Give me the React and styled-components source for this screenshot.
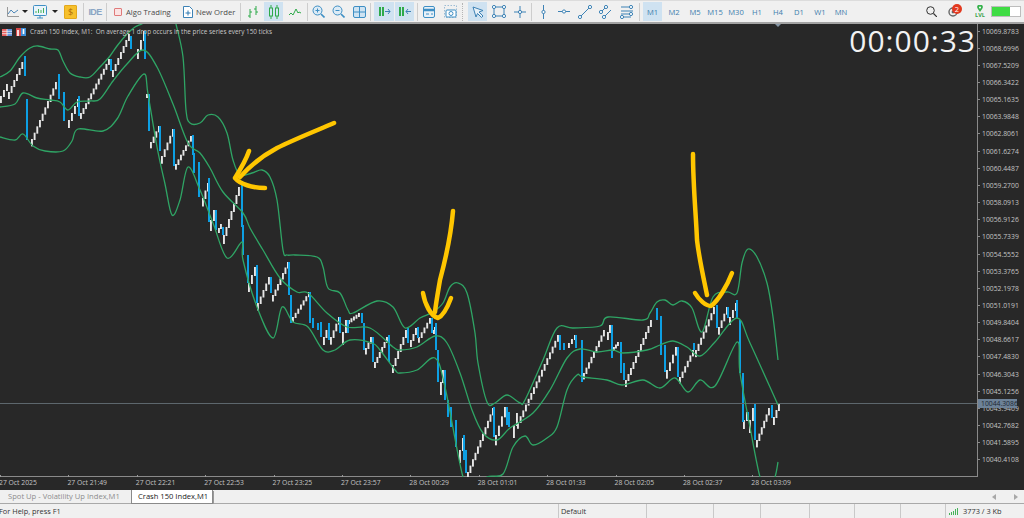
import React from "react";
import styled, { createGlobalStyle } from "styled-components";

const upperBand = [
  [0, 77], [10, 71], [20, 57], [30, 48], [38, 46], [50, 49], [58, 50], [63, 61], [70, 73], [80, 77], [90, 77],
  [100, 67], [110, 56], [117, 46], [127, 34], [135, 27], [145, 22], [160, 8], [172, 8], [176, 24], [183, 57], [186, 110],
  [190, 123], [200, 123], [208, 115], [218, 117], [227, 133], [233, 160], [240, 175], [252, 173], [262, 170], [270, 177],
  [277, 200], [283, 250], [287, 255], [295, 255], [317, 257], [323, 267], [328, 288], [340, 293], [348, 310], [353, 313],
  [377, 301], [393, 307], [405, 328], [420, 318], [433, 312], [443, 303], [450, 287], [458, 283], [467, 293], [475, 333],
  [478, 363], [487, 402], [495, 403], [507, 395], [520, 403], [525, 400], [543, 360], [557, 328], [573, 328], [600, 326],
  [608, 317], [643, 320], [650, 313], [657, 302], [665, 300], [673, 305], [682, 301], [692, 308], [702, 332], [713, 297],
  [727, 292], [737, 293], [742, 263], [748, 249], [757, 257], [767, 283], [773, 317], [778, 360],
];
const middleBand = [
  [0, 107], [15, 104], [23, 93], [37, 98], [50, 100], [60, 102], [68, 110], [77, 102], [90, 101], [100, 99], [113, 81],
  [127, 64], [143, 50], [157, 67], [173, 104], [188, 143], [200, 153], [210, 168], [223, 192], [243, 213], [250, 228],
  [263, 250], [280, 278], [297, 292], [308, 293], [327, 313], [347, 327], [370, 328], [393, 347], [400, 350], [417, 347],
  [435, 336], [447, 343], [460, 373], [472, 410], [483, 433], [497, 440], [510, 428], [533, 413], [550, 390], [567, 358],
  [580, 349], [597, 352], [613, 350], [623, 353], [647, 350], [660, 345], [673, 341], [687, 347], [700, 356], [715, 342],
  [737, 318], [750, 343], [778, 405],
];
const lowerBand = [
  [0, 137], [15, 140], [23, 134], [33, 146], [45, 151], [63, 151], [72, 141], [78, 129], [103, 131], [117, 119], [128, 96],
  [144, 74], [148, 94], [157, 147], [165, 184], [172, 215], [180, 200], [188, 167], [200, 190], [213, 223], [227, 258],
  [242, 242], [243, 260], [257, 307], [273, 338], [282, 307], [293, 322], [308, 327], [323, 350], [335, 350], [350, 340],
  [372, 343], [380, 350], [395, 370], [400, 373], [417, 370], [435, 358], [445, 387], [463, 477], [475, 492], [487, 477],
  [503, 474], [513, 447], [525, 436], [533, 445], [547, 438], [557, 427], [567, 390], [577, 375], [583, 377], [607, 380],
  [622, 385], [643, 380], [660, 388], [675, 378], [688, 392], [700, 380], [715, 386], [737, 342], [740, 373], [750, 427],
  [760, 477], [768, 492], [775, 477], [778, 462],
];

const whiteRuns = [
  [0, 96, 6, 84], [8, 92, 24, 56], [31, 139, 55, 82], [68, 120, 77, 99], [80, 113, 108, 59], [112, 70, 128, 34], [137, 49, 143, 31],
  [146, 94, 147, 94], [150, 142, 158, 126], [161, 156, 172, 129], [175, 164, 190, 136], [202, 198, 207, 183], [210, 220, 213, 210],
  [218, 228, 220, 224], [223, 235, 238, 187], [248, 283, 254, 267], [257, 303, 268, 277], [272, 295, 287, 262], [292, 317, 308, 292],
  [323, 337, 328, 323], [330, 337, 338, 317], [342, 332, 345, 320], [348, 320, 358, 313], [365, 348, 370, 337], [374, 362, 386, 337],
  [392, 365, 405, 330], [410, 340, 415, 328], [418, 337, 429, 318], [433, 330, 434, 327], [440, 382, 442, 370], [459, 450, 462, 438],
  [467, 472, 492, 408], [495, 435, 504, 407], [513, 425, 516, 413], [517, 422, 557, 335], [568, 343, 574, 335], [583, 373, 603, 330],
  [607, 332, 609, 325], [613, 347, 617, 342], [625, 380, 650, 320], [666, 370, 675, 347], [679, 377, 692, 350], [695, 350, 713, 307],
  [718, 327, 726, 307], [729, 317, 735, 303], [743, 420, 746, 412], [749, 420, 752, 408], [756, 440, 768, 408], [773, 417, 778, 403],
];
const blueBars = [
  [24, 56, 76], [26, 99, 140], [58, 74, 99], [63, 92, 121], [78, 96, 116], [110, 59, 71], [130, 36, 49], [144, 31, 59], [148, 94, 131],
  [159, 126, 151], [173, 129, 166], [192, 135, 155], [193, 153, 173], [198, 162, 197], [208, 178, 222], [215, 210, 230], [222, 227, 235],
  [241, 183, 227], [242, 225, 255], [247, 255, 283], [256, 265, 303], [270, 277, 293], [288, 262, 295], [290, 295, 323], [309, 292, 323],
  [312, 318, 328], [317, 323, 330], [320, 322, 337], [328, 323, 340], [339, 317, 333], [347, 320, 333], [361, 313, 323], [363, 323, 350],
  [372, 337, 362], [388, 335, 362], [407, 328, 343], [417, 327, 338], [431, 318, 333], [435, 323, 350], [437, 350, 382], [444, 370, 400],
  [447, 400, 417], [450, 407, 427], [455, 420, 447], [463, 435, 460], [465, 450, 473], [493, 407, 437], [506, 407, 425], [508, 412, 427],
  [559, 335, 350], [563, 343, 350], [575, 335, 348], [581, 340, 382], [611, 325, 358], [620, 342, 373], [623, 363, 380], [656, 308, 320],
  [660, 316, 355], [664, 345, 372], [677, 347, 377], [693, 343, 350], [716, 305, 328], [727, 307, 318], [736, 300, 318], [739, 320, 373],
  [742, 373, 422], [747, 412, 420], [754, 403, 440], [771, 405, 418],
];
const arrows = [
  "M334 123 C318 130 295 139 277 148 C262 156 250 166 240 177",
  "M249 151 C246 160 240 170 235 178 C240 184 252 188 265 188",
  "M453 211 C451 235 444 265 440 280 C438 292 436 303 435 312",
  "M423 293 C425 305 431 316 438 318 C443 316 448 306 451 298",
  "M693 154 C693 185 696 215 697 240 C699 258 704 280 707 295",
  "M695 293 C699 300 706 306 711 306 C718 301 727 286 732 273",
];

const prices = [
  "10069.8783", "10068.6996", "10067.5209", "10066.3422", "10065.1635", "10063.9848", "10062.8061", "10061.6274", "10060.4487",
  "10059.2700", "10058.0913", "10056.9126", "10055.7339", "10054.5552", "10053.3765", "10052.1978", "10051.0191", "10049.8404",
  "10048.6617", "10047.4830", "10046.3043", "10045.1256", "10043.9469", "10042.7682", "10041.5895", "10040.4108",
];
const times = [
  "27 Oct 2025", "27 Oct 21:49", "27 Oct 22:21", "27 Oct 22:53", "27 Oct 23:25", "27 Oct 23:57",
  "28 Oct 00:29", "28 Oct 01:01", "28 Oct 01:33", "28 Oct 02:05", "28 Oct 02:37", "28 Oct 03:09",
];
const frames = [["M2", 24], ["M5", 18], ["M15", 22], ["M30", 20], ["H1", 22], ["H4", 20], ["D1", 22], ["W1", 20], ["MN", 22]];

// catmull-rom so the bands look like a moving average and not a zigzag
function smooth(pts) {
  let d = `M${pts[0][0]} ${pts[0][1]}`;
  for (let i = 0; i < pts.length - 1; i++) {
    const p0 = pts[i - 1] || pts[i];
    const p1 = pts[i];
    const p2 = pts[i + 1];
    const p3 = pts[i + 2] || p2;
    const c1x = p1[0] + (p2[0] - p0[0]) / 6;
    const c1y = p1[1] + (p2[1] - p0[1]) / 6;
    const c2x = p2[0] - (p3[0] - p1[0]) / 6;
    const c2y = p2[1] - (p3[1] - p1[1]) / 6;
    d += ` C${c1x.toFixed(1)} ${c1y.toFixed(1)} ${c2x.toFixed(1)} ${c2y.toFixed(1)} ${p2[0]} ${p2[1]}`;
  }
  return d;
}

function bricks([x0, y0, x1, y1]) {
  const n = Math.max(1, Math.round((x1 - x0) / 2.6));
  const out = [];
  for (let i = 0; i <= n; i++) {
    const x = x0 + ((x1 - x0) * i) / n;
    const y = y0 + ((y1 - y0) * i) / n;
    out.push({ x, y, h: Math.max(4, Math.abs(y1 - y0) / n + 1) });
  }
  return out;
}

function CandleChart() {
  return (
    <ChartSvg viewBox="0 24 977 453" width="977" height="453">
      {whiteRuns.flatMap(bricks).map((b, i) => (
        <rect key={i} x={b.x} y={b.y} width="1.9" height={b.h} fill="#e6e6e6" />
      ))}
      {blueBars.map(([x, a, b], i) => (
        <rect key={i} x={x} y={a} width="2" height={b - a} fill="#0d9fe3" />
      ))}
      <rect x="0" y="403" width="977" height="1" fill="#5d676d" />
      {[upperBand, middleBand, lowerBand].map((b, i) => (
        <path key={i} d={smooth(b)} fill="none" stroke="#2fa565" strokeWidth="1.3" />
      ))}
      {arrows.map((d, i) => (
        <path key={i} d={d} fill="none" stroke="#ffc600" strokeWidth="4.5" strokeLinecap="round" strokeLinejoin="round" />
      ))}
    </ChartSvg>
  );
}

const Ico = ({ w = 14, h = 14, children }) => (
  <svg width={w} height={h} viewBox={`0 0 ${w} ${h}`} fill="none" strokeWidth="1">
    {children}
  </svg>
);

function Caret() {
  return (
    <CaretBox>
      <svg width="6" height="3" viewBox="0 0 6 3"><path d="M0 0h6L3 3z" fill="#222" /></svg>
    </CaretBox>
  );
}

const handle = (x, y) => <circle cx={x} cy={y} r="1.6" fill="#fff" stroke="#3d82b5" />;

export default function App() {
  return (
    <>
      <GlobalStyle />
      <Window>
        <Toolbar>
          <Tool $w={18}>
            <Ico w={12} h={10}>
              <path d="M.5 0v9.5H12" stroke="#9a9a9a" />
              <path d="M1 7l3-4 3 3 4-3" stroke="#4c86b8" />
            </Ico>
          </Tool>
          <Caret />
          <Tool $w={24}>
            <Ico w={14} h={14}>
              <rect x=".5" y=".5" width="13" height="10" rx="1" fill="#eaf4fb" stroke="#3f8fc4" />
              <path d="M3 8V6M5.5 8V4M8 8V5M10.5 8V3" stroke="#45b25a" />
              <path d="M4 13h6M7 11v2" stroke="#3f8fc4" />
            </Ico>
          </Tool>
          <Caret />
          <Tool $w={25}>
            <CoinIcon>$</CoinIcon>
          </Tool>
          <Sep />
          <Tool $w={22}>
            <IdeLabel>IDE</IdeLabel>
          </Tool>
          <Sep />
          <TextTool $w={71} $pl={7} $gap={5}>
            <AlgoMark />
            Algo Trading
          </TextTool>
          <TextTool $w={62} $pl={5} $gap={3}>
            <Ico w={10} h={12}>
              <path d="M.5.5h6l3 3v8h-9z" fill="#fff" stroke="#3d82b5" />
              <path d="M5 4.5v5M2.5 7h5" stroke="#2f78b0" />
            </Ico>
            New Order
          </TextTool>
          <Sep />
          <Tool $w={23}>
            <Ico w={12} h={12}>
              <path d="M3 3v9M1 10h2M3 6h2M9 0v9M7 3h2M9 6h2" stroke="#2eaa4a" />
            </Ico>
          </Tool>
          <Tool $w={19} $active>
            <Ico w={12} h={14}>
              <rect x="1.5" y="3" width="3" height="8" stroke="#2eaa4a" />
              <rect x="7.5" y="3" width="3" height="8" stroke="#2eaa4a" />
              <path d="M3 0v3M3 11v3M9 0v3M9 11v3" stroke="#2eaa4a" />
            </Ico>
          </Tool>
          <Tool $w={24}>
            <Ico w={12} h={8}>
              <path d="M0 7l2-2 2 2 3-6 2 4 1-1 2 1" stroke="#2eaa4a" />
            </Ico>
          </Tool>
          <Sep />
          <Tool $w={21}>
            <Ico w={13} h={13}>
              <circle cx="5.5" cy="5.5" r="4.5" fill="#dcebf6" stroke="#3f8fc4" />
              <path d="M3.5 5.5h4M5.5 3.5v4" stroke="#3f8fc4" />
              <path d="M9 9l3.5 3.5" stroke="#3f8fc4" strokeWidth="1.6" />
            </Ico>
          </Tool>
          <Tool $w={18}>
            <Ico w={13} h={13}>
              <circle cx="5.5" cy="5.5" r="4.5" fill="#dcebf6" stroke="#3f8fc4" />
              <path d="M3.5 5.5h4" stroke="#3f8fc4" />
              <path d="M9 9l3.5 3.5" stroke="#3f8fc4" strokeWidth="1.6" />
            </Ico>
          </Tool>
          <Tool $w={21} $ml={2}>
            <Ico w={13} h={12}>
              <rect x=".5" y=".5" width="12" height="11" rx="1.5" fill="#cfe3f2" stroke="#3f8fc4" />
              <path d="M6.5 0v12M0 6h13" stroke="#3f8fc4" />
            </Ico>
          </Tool>
          <Sep />
          <Tool $w={20} $ml={3} $active>
            <Ico w={13} h={12}>
              <path d="M2 1v9M5 1v9" stroke="#2eaa4a" strokeWidth="2" />
              <path d="M7 5.5h5M10 3l2 2.5L10 8" stroke="#3d82b5" />
            </Ico>
          </Tool>
          <Tool $w={19} $ml={1} $active>
            <Ico w={13} h={12}>
              <path d="M2 1v9M5 1v9" stroke="#2eaa4a" strokeWidth="2" />
              <path d="M8 5.5h5M10 3L8 5.5 10 8" stroke="#3d82b5" />
            </Ico>
          </Tool>
          <Sep $ml={3} />
          <Tool $w={22}>
            <Ico w={12} h={12}>
              <rect x=".5" y=".5" width="11" height="11" rx="1.5" fill="#e8f1f8" stroke="#3f8fc4" />
              <path d="M0 4h12" stroke="#3f8fc4" strokeWidth="2.5" />
              <path d="M3 8h3M8 8h2" stroke="#3f8fc4" />
            </Ico>
          </Tool>
          <Tool $w={21}>
            <Ico w={13} h={13}>
              <rect x=".5" y=".5" width="12" height="12" stroke="#9dbcd4" strokeDasharray="1.5 1.5" />
              <rect x="2" y="5" width="10" height="7" rx="1" fill="#fff" stroke="#3f8fc4" />
              <circle cx="7" cy="8.5" r="2" stroke="#3f8fc4" />
            </Ico>
          </Tool>
          <DotSep />
          <Tool $w={19} $ml={4} $active>
            <Ico w={12} h={12}>
              <path d="M1 1l10 3.5-4 1.5 4 4-1.5 1.5-4-4L4 11z" fill="#e8f1f8" stroke="#3d82b5" />
            </Ico>
          </Tool>
          <Tool $w={23}>
            <Ico w={14} h={13}>
              <rect x="2" y="2" width="10" height="9" stroke="#3d82b5" />
              {handle(2, 2)}{handle(12, 2)}{handle(2, 11)}{handle(12, 11)}
            </Ico>
          </Tool>
          <Tool $w={19}>
            <Ico w={12} h={12}>
              <path d="M6 0v12M0 6h12" stroke="#3d82b5" />
              {handle(6, 6)}
            </Ico>
          </Tool>
          <Sep $ml={2} />
          <Tool $w={22}>
            <Ico w={5} h={14}>
              <path d="M2.5 0v14" stroke="#3d82b5" />
              {handle(2.5, 7)}
            </Ico>
          </Tool>
          <Tool $w={20}>
            <Ico w={12} h={5}>
              <path d="M0 2.5h12" stroke="#3d82b5" />
              {handle(6, 2.5)}
            </Ico>
          </Tool>
          <Tool $w={22}>
            <Ico w={14} h={14}>
              <path d="M2 12L12 2" stroke="#3d82b5" />
              {handle(2, 12)}{handle(12, 2)}
            </Ico>
          </Tool>
          <Tool $w={20}>
            <Ico w={14} h={14}>
              <path d="M1 8l6-6M5 12l7-7" stroke="#3d82b5" />
              {handle(2, 7)}{handle(7, 2)}{handle(5, 12)}
            </Ico>
          </Tool>
          <Tool $w={21}>
            <Ico w={13} h={14}>
              <path d="M1 2h12M1 6h12M1 9h12M1 12h10" stroke="#3d82b5" />
              {handle(11, 2)}{handle(11, 9)}{handle(2, 12)}
            </Ico>
          </Tool>
          <Sep $ml={2} />
          <FrameTool $w={19} $ml={3} $active>M1</FrameTool>
          {frames.map(([name, w]) => (
            <FrameTool key={name} $w={w}>{name}</FrameTool>
          ))}
          <RightGroup>
            <Tool $w={12}>
              <Ico w={11} h={11}>
                <circle cx="4.5" cy="4.5" r="3.8" stroke="#333" />
                <path d="M7.5 7.5L11 11" stroke="#333" strokeWidth="1.2" />
              </Ico>
            </Tool>
            <BellBox>
              <Ico w={10} h={10}>
                <circle cx="5" cy="5" r="4" stroke="#666" strokeWidth="1.4" />
                <circle cx="5" cy="5" r="1.4" fill="#666" />
              </Ico>
              <RedBadge>2</RedBadge>
            </BellBox>
            <LevelBox>
              <Ico w={6} h={7}>
                <path d="M3 7L.6 3.4a2.8 2.8 0 1 1 4.8 0z" fill="#37b24d" />
                <circle cx="3" cy="2.6" r="1" fill="#fff" />
              </Ico>
              <LevelText>LVL</LevelText>
            </LevelBox>
            <Meter>
              <MeterFill style={{ width: "66%" }} />
            </Meter>
          </RightGroup>
        </Toolbar>

        <ChartRow>
          <Plot>
            <CandleChart />
            <Legend>
              <Ico w={10} h={7}>
                <rect width="10" height="7" fill="#e85e5e" />
                <path d="M5 0h5v7H5z" fill="#5b8fd8" />
                <path d="M0 2.3h10M0 4.7h10M5 0v7" stroke="#f4f4f4" strokeWidth=".8" />
              </Ico>
              <Ico w={10} h={8}>
                <rect width="5" height="8" fill="#d94a4a" />
                <rect x="5" width="5" height="8" fill="#3e8fd8" />
                <path d="M2 2v6M7.5 1v5" stroke="#fff" strokeWidth="1.6" />
              </Ico>
              <LegendText>Crash 150 Index, M1:&nbsp; On average 1 drop occurs in the price series every 150 ticks</LegendText>
            </Legend>
            <ShiftMark />
          </Plot>
          <PriceAxis>
            {prices.map((p) => (
              <PriceLabel key={p}>{p}</PriceLabel>
            ))}
          </PriceAxis>
          <Timer>00:00:33</Timer>
          <PriceTag>10044.3086</PriceTag>
        </ChartRow>

        <TimeAxis>
          {times.map((t) => (
            <TimeLabel key={t}>{t}</TimeLabel>
          ))}
        </TimeAxis>

        <TabBar>
          <Tab>Spot Up - Volatility Up Index,M1</Tab>
          <Tab $active>Crash 150 Index,M1</Tab>
          <TabArrows>
            <svg width="4" height="6" viewBox="0 0 4 6"><path d="M4 0v6L0 3z" fill="#a8a8a8" /></svg>
            <svg width="4" height="6" viewBox="0 0 4 6"><path d="M0 0v6l4-3z" fill="#a8a8a8" /></svg>
          </TabArrows>
        </TabBar>

        <StatusBar>
          <StatusCell $w={559}>For Help, press F1</StatusCell>
          <StatusCell $w={88} $pl={2} $line>Default</StatusCell>
          <StatusCell $w={67} $line />
          <StatusCell $w={47} $line />
          <StatusCell $w={49} $line />
          <StatusCell $w={45} $line />
          <StatusCell $w={46} $line />
          <StatusCell $w={45} $line />
          <StatusCell $w={78} $pl={3} $gap={5} $line>
            <svg width="9" height="7" viewBox="0 0 9 7">
              <path d="M0 5h1v2H0zM2 4h1v3H2zM4 3h1v4H4zM6 1h1v6H6zM8 0h1v7H8z" fill="#45b35a" />
            </svg>
            3773 / 3 Kb
          </StatusCell>
        </StatusBar>
      </Window>
    </>
  );
}

const GlobalStyle = createGlobalStyle`
  html, body {
    margin: 0;
    padding: 0;
    background: #f0f0f0;
  }
`;

const Window = styled.div`
  width: 1024px;
  height: 518px;
  overflow: hidden;
  display: flex;
  flex-direction: column;
  font-family: "Open Sans", "Liberation Sans", sans-serif;
`;

const Toolbar = styled.div`
  height: 24px;
  flex: none;
  box-sizing: border-box;
  display: flex;
  align-items: center;
  padding-left: 4px;
  background: #f0f0f0;
  border-top: 1px solid #dcdcdc;
  border-bottom: 2px solid #a3a3a3;
`;

const Tool = styled.div`
  width: ${(p) => p.$w}px;
  height: 19px;
  margin-left: ${(p) => p.$ml || 0}px;
  flex: none;
  display: flex;
  align-items: center;
  justify-content: center;
  background: ${(p) => (p.$active ? "#cfe2f1" : "transparent")};
`;

const TextTool = styled(Tool)`
  justify-content: flex-start;
  padding-left: ${(p) => p.$pl}px;
  gap: ${(p) => p.$gap}px;
  box-sizing: border-box;
  font-size: 7.7px;
  color: #4a4a4a;
  white-space: nowrap;
`;

const FrameTool = styled(Tool)`
  font-size: 7.6px;
  color: #3f7eae;
`;

const CaretBox = styled.div`
  width: 6px;
  flex: none;
  display: flex;
  justify-content: center;
`;

const CoinIcon = styled.div`
  width: 11px;
  height: 12px;
  border-radius: 1px;
  background: #f6c02c;
  border: 1px solid #e3a81c;
  display: flex;
  align-items: center;
  justify-content: center;
  font-size: 9px;
  color: #b06f0a;
`;

const IdeLabel = styled.span`
  font-family: "Liberation Sans", sans-serif;
  font-size: 9px;
  font-weight: 700;
  letter-spacing: -0.6px;
  color: #8aa5c4;
`;

const AlgoMark = styled.span`
  width: 6px;
  height: 6px;
  flex: none;
  margin-right: -1px;
  background: #fbe3e3;
  border: 1px solid #e07a7a;
  border-radius: 1px;
`;

const Sep = styled.div`
  width: 1px;
  height: 18px;
  flex: none;
  margin-left: ${(p) => p.$ml || 0}px;
  background: #cdcdcd;
`;

const DotSep = styled.div`
  width: 1px;
  height: 18px;
  flex: none;
  margin-left: 1px;
  border-left: 1px dotted #b5b5b5;
`;

const RightGroup = styled.div`
  margin-left: auto;
  display: flex;
  align-items: center;
  padding-right: 3px;
`;

const BellBox = styled.div`
  position: relative;
  width: 10px;
  margin-left: 11px;
  display: flex;
`;

const RedBadge = styled.span`
  position: absolute;
  left: 4px;
  top: -3px;
  width: 10px;
  height: 10px;
  border-radius: 50%;
  background: #e2391f;
  color: #fff;
  font-size: 7.5px;
  line-height: 10px;
  text-align: center;
`;

const LevelBox = styled.div`
  width: 10px;
  margin-left: 17px;
  display: flex;
  flex-direction: column;
  align-items: center;
`;

const LevelText = styled.span`
  font-size: 5.5px;
  line-height: 6px;
  font-weight: 700;
  color: #37a34a;
`;

const Meter = styled.div`
  width: 28px;
  height: 9px;
  margin-left: 6px;
  background: #fff;
  border: 1px solid #bdbdbd;
  display: flex;
`;

const MeterFill = styled.div`
  background: #3fdc44;
`;

const ChartRow = styled.div`
  position: relative;
  height: 453px;
  flex: none;
  display: flex;
  background: #282828;
`;

const Plot = styled.div`
  position: relative;
  width: 978px;
  flex: none;
  overflow: hidden;
  box-shadow: inset -1px 0 0 #8a8a8a, inset 0 -1px 0 #8a8a8a;
`;

const ChartSvg = styled.svg`
  display: block;
`;

const Legend = styled.div`
  position: absolute;
  left: 2px;
  top: 3px;
  display: flex;
  align-items: center;
  gap: 4px;
`;

const LegendText = styled.span`
  font-size: 6.4px;
  line-height: 10px;
  color: #c8c8c8;
  white-space: nowrap;
`;

const ShiftMark = styled.div`
  position: absolute;
  left: 775px;
  top: 0;
  width: 0;
  height: 0;
  border-left: 3px solid transparent;
  border-right: 3px solid transparent;
  border-top: 3px solid #8596a6;
`;

const Timer = styled.div`
  position: absolute;
  right: 48px;
  top: 0;
  font-size: 30px;
  line-height: 34px;
  letter-spacing: 1px;
  color: #f2f2f2;
  white-space: nowrap;
`;

const PriceAxis = styled.div`
  flex: 1;
  display: flex;
  flex-direction: column;
  gap: 5.16px;
  padding-top: 1px;
  overflow: hidden;
`;

const PriceLabel = styled.div`
  height: 12px;
  display: flex;
  align-items: center;
  gap: 2px;
  font-size: 6.8px;
  color: #c4c4c4;
  white-space: nowrap;

  &::before {
    content: "";
    width: 2px;
    height: 1px;
    flex: none;
    background: #8a8a8a;
  }
`;

const PriceTag = styled.div`
  position: absolute;
  left: 978px;
  top: 375px;
  width: 39px;
  height: 9px;
  background: #6d8298;
  color: #1d2730;
  font-size: 6.8px;
  line-height: 9px;
  padding-left: 3px;
  box-sizing: border-box;
  white-space: nowrap;
`;

const TimeAxis = styled.div`
  height: 13px;
  flex: none;
  display: flex;
  margin-left: -1px;
  background: #282828;
`;

const TimeLabel = styled.div`
  position: relative;
  width: 68.4px;
  flex: none;
  font-size: 6.8px;
  line-height: 11px;
  color: #c4c4c4;
  white-space: nowrap;

  &::before {
    content: "";
    position: absolute;
    left: 1px;
    top: -2px;
    width: 1px;
    height: 2px;
    background: #9a9a9a;
  }
`;

const TabBar = styled.div`
  height: 14px;
  flex: none;
  display: flex;
  align-items: stretch;
  padding-left: 2px;
  box-sizing: border-box;
  background: #f0f0f0;
  border-bottom: 1px solid #a9a9a9;
`;

const Tab = styled.div`
  width: ${(p) => (p.$active ? 82 : 129)}px;
  flex: none;
  box-sizing: border-box;
  padding-left: 6px;
  margin-bottom: ${(p) => (p.$active ? -1 : 0)}px;
  font-size: 7.6px;
  line-height: 13px;
  white-space: nowrap;
  color: ${(p) => (p.$active ? "#222" : "#8c8c8c")};
  background: ${(p) => (p.$active ? "#fff" : "transparent")};
  border: ${(p) => (p.$active ? "1px solid #8a8a8a" : "0")};
  border-top: 0;
  box-shadow: ${(p) => (p.$active ? "1px 1px 0 #9a9a9a" : "none")};
`;

const TabArrows = styled.div`
  margin-left: auto;
  width: 26px;
  padding-right: 6px;
  display: flex;
  align-items: center;
  justify-content: space-between;
`;

const StatusBar = styled.div`
  flex: 1;
  display: flex;
  margin-left: -1px;
  background: #f0f0f0;
  font-size: 7.4px;
  color: #333;
`;

const StatusCell = styled.div`
  width: ${(p) => p.$w}px;
  flex: none;
  box-sizing: border-box;
  display: flex;
  align-items: center;
  gap: ${(p) => p.$gap || 0}px;
  padding-left: ${(p) => p.$pl || 0}px;
  border-left: ${(p) => (p.$line ? "1px solid #c9c9c9" : "0")};
  white-space: nowrap;
`;
